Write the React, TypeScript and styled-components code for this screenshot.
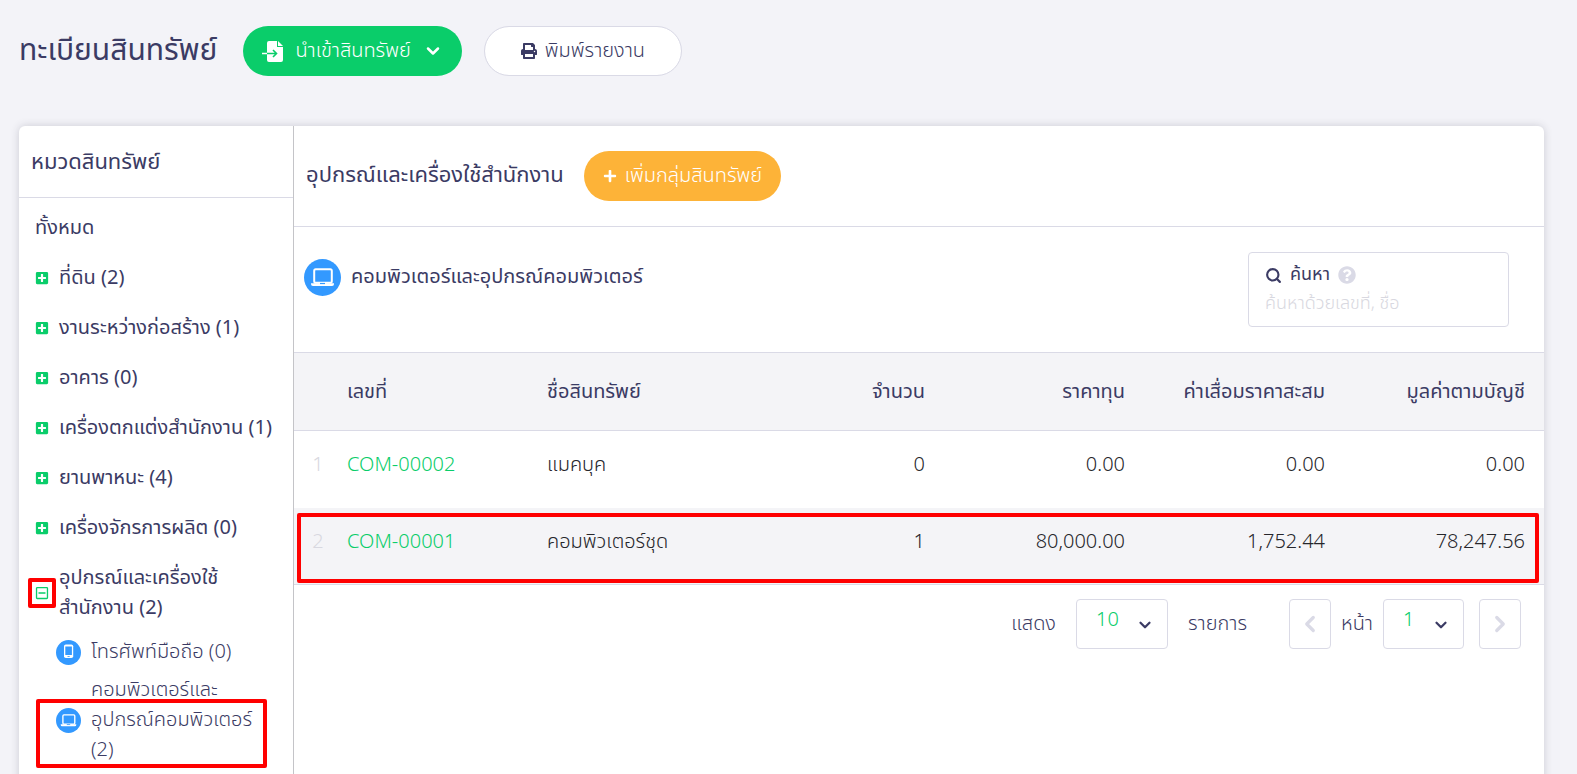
import React from "react";
import styled, { createGlobalStyle } from "styled-components";
import { FaMinus, FaPlus, FaPlusSquare, FaPrint, FaQuestionCircle, FaRegMinusSquare } from "react-icons/fa";
import { ChevronDown, ChevronLeft, ChevronRight, Search } from "lucide-react";

const color = {
  ink: "#3b3b64",
  text: "#26262b",
  muted: "#d8d8e0",
  line: "#dadae6",
  divider: "#c4c4c8",
  page: "#f3f3f8",
  stripe: "#f4f4f7",
  green: "#0acd6a",
  orange: "#fdb338",
  blue: "#3399ff",
  mark: "#ff0000",
};

const GlobalStyle = createGlobalStyle`
  *, *::before, *::after { box-sizing: border-box; }
  html { overflow: hidden; }
  body {
    margin: 0;
    background: ${color.page};
    color: ${color.ink};
    font-family: "Noto Sans Thai", "Noto Sans", sans-serif;
    font-size: 20px;
    font-weight: 300;
    line-height: 30px;
  }
  button, input, select { font: inherit; color: inherit; }
  a { color: inherit; text-decoration: none; }
  h1, h2, h3, ul { margin: 0; padding: 0; font-weight: 400; }
  ul { list-style: none; }
`;

const Page = styled.div`
  display: flex;
  flex-direction: column;
  gap: 50px;
  height: 100vh;
  padding: 26px 33px 0 19px;
`;

const PageHeader = styled.header`
  display: flex;
  align-items: center;
  gap: 22px;
`;

const PageTitle = styled.h1`
  font-size: 30px;
  line-height: 40px;
  margin-right: 4px;
`;

const PillButton = styled.button<{ $tone: "green" | "orange" | "plain" }>`
  display: flex;
  align-items: center;
  justify-content: center;
  gap: ${(p) => (p.$tone === "green" ? 12 : 8)}px;
  height: 50px;
  padding: 0 ${(p) => (p.$tone === "plain" ? 36 : 18)}px;
  border: 1px solid ${(p) => (p.$tone === "plain" ? color.line : "transparent")};
  border-radius: 25px;
  background: ${(p) => (p.$tone === "plain" ? "#fff" : color[p.$tone])};
  background-clip: ${(p) => (p.$tone === "plain" ? "padding-box" : "border-box")};
  color: ${(p) => (p.$tone === "plain" ? color.ink : "#fff")};
  white-space: nowrap;
  cursor: pointer;

  svg { flex: none; }
`;

const Card = styled.main`
  display: grid;
  grid-template-columns: 275px minmax(0, 1fr);
  flex: 1 0 auto;
  border-radius: 6px 6px 0 0;
  background: #fff;
  box-shadow: 0 0 8px rgba(50, 50, 70, 0.2);
`;

const Sidebar = styled.nav`
  border-right: 1px solid ${color.divider};
`;

const SidebarTitle = styled.h2`
  padding: 22px 12px 19px;
  border-bottom: 1px solid ${color.line};
  font-size: 22px;
`;

const CategoryList = styled.ul`
  padding: 5px 12px 0 16px;
  font-weight: 400;
`;

const CategoryRow = styled.div`
  display: flex;
  align-items: center;
  gap: 10px;
  padding: 10px 0;
`;

const Toggle = styled.button`
  position: relative;
  display: flex;
  flex: none;
  padding: 0;
  border: 0;
  background: none;
  color: ${color.green};
  cursor: pointer;
`;

const SubList = styled.ul`
  padding-left: 21px;
  font-weight: 300;
`;

const SubRow = styled.li`
  position: relative;
  display: flex;
  align-items: center;
  gap: 10px;
  padding: 4px 8px 4px 0;

  svg { flex: none; }
`;

const Mark = styled.span<{ $inset: string }>`
  position: absolute;
  inset: ${(p) => p.$inset};
  border: 4px solid ${color.mark};
  border-radius: 2px;
  pointer-events: none;
`;

const Content = styled.section`
  min-width: 0;
`;

const ContentHeader = styled.header`
  display: flex;
  align-items: center;
  gap: 20px;
  padding: 25px 12px;
  border-bottom: 1px solid ${color.line};
`;

const ContentTitle = styled.h2`
  font-size: 22px;
`;

const Toolbar = styled.div`
  display: flex;
  align-items: flex-start;
  justify-content: space-between;
  padding: 25px 35px 25px 10px;
`;

const GroupTitle = styled.h3`
  display: flex;
  align-items: center;
  gap: 10px;
  height: 50px;
  font-size: 20px;
`;

const SearchBox = styled.div`
  display: flex;
  flex-direction: column;
  width: 261px;
  height: 75px;
  padding: 8px 16px;
  border: 1px solid ${color.line};
  border-radius: 4px;
`;

const SearchLabel = styled.label`
  display: flex;
  align-items: center;
  gap: 8px;
  height: 28px;
  font-size: 18px;
  font-weight: 400;
`;

const SearchInput = styled.input`
  width: 100%;
  height: 30px;
  padding: 0;
  border: 0;
  outline: 0;
  background: none;
  font-size: 18px;

  &::placeholder { color: ${color.muted}; opacity: 1; }
`;

const Table = styled.table`
  width: 100%;
  table-layout: fixed;
  border-collapse: collapse;
  border-bottom: 1px solid ${color.line};
`;

const HeadRow = styled.tr`
  height: 78px;
  border-top: 1px solid ${color.line};
  border-bottom: 1px solid ${color.line};
  background: ${color.stripe};
`;

const BodyRow = styled.tr`
  position: relative;
  height: 77px;
  color: ${color.text};

  &:nth-child(even) { background: ${color.stripe}; }
`;

const Th = styled.th<{ $end?: boolean }>`
  padding: ${(p) => (p.$end ? "0 19px 0 0" : "0 0 0 5px")};
  font-weight: 400;
  text-align: ${(p) => (p.$end ? "right" : "left")};
  white-space: nowrap;
`;

const Td = styled.td<{ $end?: boolean }>`
  padding: ${(p) => (p.$end ? "0 19px 8px 0" : "0 0 8px 5px")};
  text-align: ${(p) => (p.$end ? "right" : "left")};
`;

const IndexTd = styled.td`
  padding: 0 0 8px;
  color: ${color.muted};
  text-align: center;
`;

const IndexCol = styled.col` width: 48px; `;
const DataCol = styled.col<{ $share?: number }>`
  width: ${(p) => (p.$share ? `${p.$share}%` : "auto")};
`;

const CodeLink = styled.a`
  && { color: ${color.green}; }
`;

const Pager = styled.footer`
  display: flex;
  align-items: center;
  justify-content: flex-end;
  padding: 14px 23px;
`;

const PagerGroup = styled.div<{ $gap: number }>`
  display: flex;
  align-items: center;
  gap: ${(p) => p.$gap}px;
  margin-left: 42px;
`;

const SelectBox = styled.span<{ $width: number }>`
  position: relative;
  display: flex;
  width: ${(p) => p.$width}px;

  svg {
    position: absolute;
    top: 17px;
    right: 14px;
    pointer-events: none;
  }
`;

const Select = styled.select`
  width: 100%;
  height: 50px;
  padding: 0 0 8px 19px;
  border: 1px solid ${color.line};
  border-radius: 4px;
  appearance: none;
  background: #fff;
  color: ${color.green};
`;

const StepButton = styled.button`
  display: flex;
  align-items: center;
  justify-content: center;
  width: 42px;
  height: 50px;
  padding: 0;
  border: 1px solid ${color.line};
  border-radius: 4px;
  background: #fff;
  color: ${color.line};
`;

const NextButton = styled(StepButton)`
  margin-left: 5px;
`;

const ImportIcon = () => (
  <svg width="21" height="21" viewBox="0 0 21 21" aria-hidden="true">
    <path d="M7 0h8v6h6v13a2 2 0 0 1-2 2H7a2 2 0 0 1-2-2V2a2 2 0 0 1 2-2z" fill="#fff" />
    <path d="M16 0l5 5h-5z" fill="#fff" />
    <path d="M0 12.500h5" stroke="#fff" strokeWidth="1.500" />
    <path d="M5 12.500h9M11 9l3.500 3.500L11 16" fill="none" stroke={color.green} strokeWidth="1.600" />
  </svg>
);

const LaptopIcon = ({ size }: { size: number }) => (
  <svg width={size} height={size} viewBox="0 0 37 37" aria-hidden="true">
    <circle cx="18.500" cy="18.500" r="18.500" fill={color.blue} />
    <rect x="10.200" y="10.200" width="17.600" height="13.600" rx="1.500" fill="none" stroke="#fff" strokeWidth="2" />
    <path d="M7 24.200h23v.8a2 2 0 0 1-2 2H9a2 2 0 0 1-2-2z" fill="#fff" />
    <path d="M16 24.500h5" stroke={color.blue} strokeWidth="1.200" />
  </svg>
);

const PhoneIcon = ({ size }: { size: number }) => (
  <svg width={size} height={size} viewBox="0 0 25 25" aria-hidden="true">
    <circle cx="12.500" cy="12.500" r="12.500" fill={color.blue} />
    <rect x="8" y="4.500" width="9.200" height="13.600" rx="1.800" fill="#fff" />
    <rect x="9.300" y="6.500" width="6.600" height="8.500" fill={color.blue} />
    <path d="M11.500 16.500h2.200" stroke={color.blue} strokeWidth=".8" />
  </svg>
);

const categories = [
  "ที่ดิน (2)",
  "งานระหว่างก่อสร้าง (1)",
  "อาคาร (0)",
  "เครื่องตกแต่งสำนักงาน (1)",
  "ยานพาหนะ (4)",
  "เครื่องจักรการผลิต (0)",
];

const assets = [
  { code: "COM-00002", name: "แมคบุค", values: ["0", "0.00", "0.00", "0.00"] },
  { code: "COM-00001", name: "คอมพิวเตอร์ชุด", values: ["1", "80,000.00", "1,752.44", "78,247.56"], marked: true },
];

export default function App() {
  return (
    <>
      <GlobalStyle />
      <Page>
        <PageHeader>
          <PageTitle>ทะเบียนสินทรัพย์</PageTitle>
          <PillButton $tone="green">
            <ImportIcon />
            นำเข้าสินทรัพย์
            <ChevronDown size={20} strokeWidth={3} />
          </PillButton>
          <PillButton $tone="plain">
            <FaPrint size={16} />
            พิมพ์รายงาน
          </PillButton>
        </PageHeader>

        <Card>
          <Sidebar aria-label="หมวดสินทรัพย์">
            <SidebarTitle>หมวดสินทรัพย์</SidebarTitle>
            <CategoryList>
              <li>
                <CategoryRow><a href="#all">ทั้งหมด</a></CategoryRow>
              </li>
              {categories.map((name) => (
                <li key={name}>
                  <CategoryRow>
                    <Toggle aria-label={name} aria-expanded={false}><FaPlusSquare size={14} /></Toggle>
                    <a href="#category">{name}</a>
                  </CategoryRow>
                </li>
              ))}
              <li>
                <CategoryRow>
                  <Toggle aria-label="อุปกรณ์และเครื่องใช้สำนักงาน" aria-expanded>
                    <FaRegMinusSquare size={14} />
                    <Mark $inset="-8px -7px" />
                  </Toggle>
                  <a href="#office">อุปกรณ์และเครื่องใช้สำนักงาน (2)</a>
                </CategoryRow>
                <SubList>
                  <SubRow>
                    <PhoneIcon size={25} />
                    <a href="#phone">โทรศัพท์มือถือ (0)</a>
                  </SubRow>
                  <SubRow>
                    <LaptopIcon size={25} />
                    <a href="#computer">คอมพิวเตอร์และอุปกรณ์คอมพิวเตอร์ (2)</a>
                    <Mark $inset="28px 14px 1px -20px" />
                  </SubRow>
                  <SubRow>
                    <LaptopIcon size={25} />
                    <a href="#machine">เครื่อง</a>
                  </SubRow>
                </SubList>
              </li>
            </CategoryList>
          </Sidebar>

          <Content>
            <ContentHeader>
              <ContentTitle>อุปกรณ์และเครื่องใช้สำนักงาน</ContentTitle>
              <PillButton $tone="orange">
                <FaPlus size={14} />
                เพิ่มกลุ่มสินทรัพย์
              </PillButton>
            </ContentHeader>

            <Toolbar>
              <GroupTitle>
                <LaptopIcon size={37} />
                คอมพิวเตอร์และอุปกรณ์คอมพิวเตอร์
              </GroupTitle>
              <SearchBox>
                <SearchLabel htmlFor="search">
                  <Search size={17} strokeWidth={3} />
                  ค้นหา
                  <FaQuestionCircle size={18} color={color.line} />
                </SearchLabel>
                <SearchInput id="search" type="text" placeholder="ค้นหาด้วยเลขที่, ชื่อ" />
              </SearchBox>
            </Toolbar>

            <Table>
              <colgroup>
                <IndexCol />
                <DataCol $share={16} />
                <DataCol />
                <DataCol $share={16} />
                <DataCol $share={16} />
                <DataCol $share={16} />
                <DataCol $share={16} />
              </colgroup>
              <thead>
                <HeadRow>
                  <Th />
                  <Th>เลขที่</Th>
                  <Th>ชื่อสินทรัพย์</Th>
                  <Th $end>จำนวน</Th>
                  <Th $end>ราคาทุน</Th>
                  <Th $end>ค่าเสื่อมราคาสะสม</Th>
                  <Th $end>มูลค่าตามบัญชี</Th>
                </HeadRow>
              </thead>
              <tbody>
                {assets.map((asset, i) => (
                  <BodyRow key={asset.code}>
                    <IndexTd>
                      {i + 1}
                      {asset.marked && <Mark $inset="5px 5px 2px 3px" />}
                    </IndexTd>
                    <Td><CodeLink href="#asset">{asset.code}</CodeLink></Td>
                    <Td>{asset.name}</Td>
                    {asset.values.map((value, n) => (
                      <Td $end key={n}>{value}</Td>
                    ))}
                  </BodyRow>
                ))}
              </tbody>
            </Table>

            <Pager>
              <PagerGroup $gap={20}>
                <label htmlFor="page-size">แสดง</label>
                <SelectBox $width={92}>
                  <Select id="page-size" defaultValue="10"><option>10</option></Select>
                  <ChevronDown size={18} strokeWidth={3} />
                </SelectBox>
                <span>รายการ</span>
              </PagerGroup>
              <PagerGroup $gap={10}>
                <StepButton aria-label="ก่อนหน้า" disabled><ChevronLeft size={26} strokeWidth={3} /></StepButton>
                <label htmlFor="page-number">หน้า</label>
                <SelectBox $width={81}>
                  <Select id="page-number" defaultValue="1"><option>1</option></Select>
                  <ChevronDown size={18} strokeWidth={3} />
                </SelectBox>
                <NextButton aria-label="ถัดไป" disabled><ChevronRight size={26} strokeWidth={3} /></NextButton>
              </PagerGroup>
            </Pager>
          </Content>
        </Card>
      </Page>
    </>
  );
}
